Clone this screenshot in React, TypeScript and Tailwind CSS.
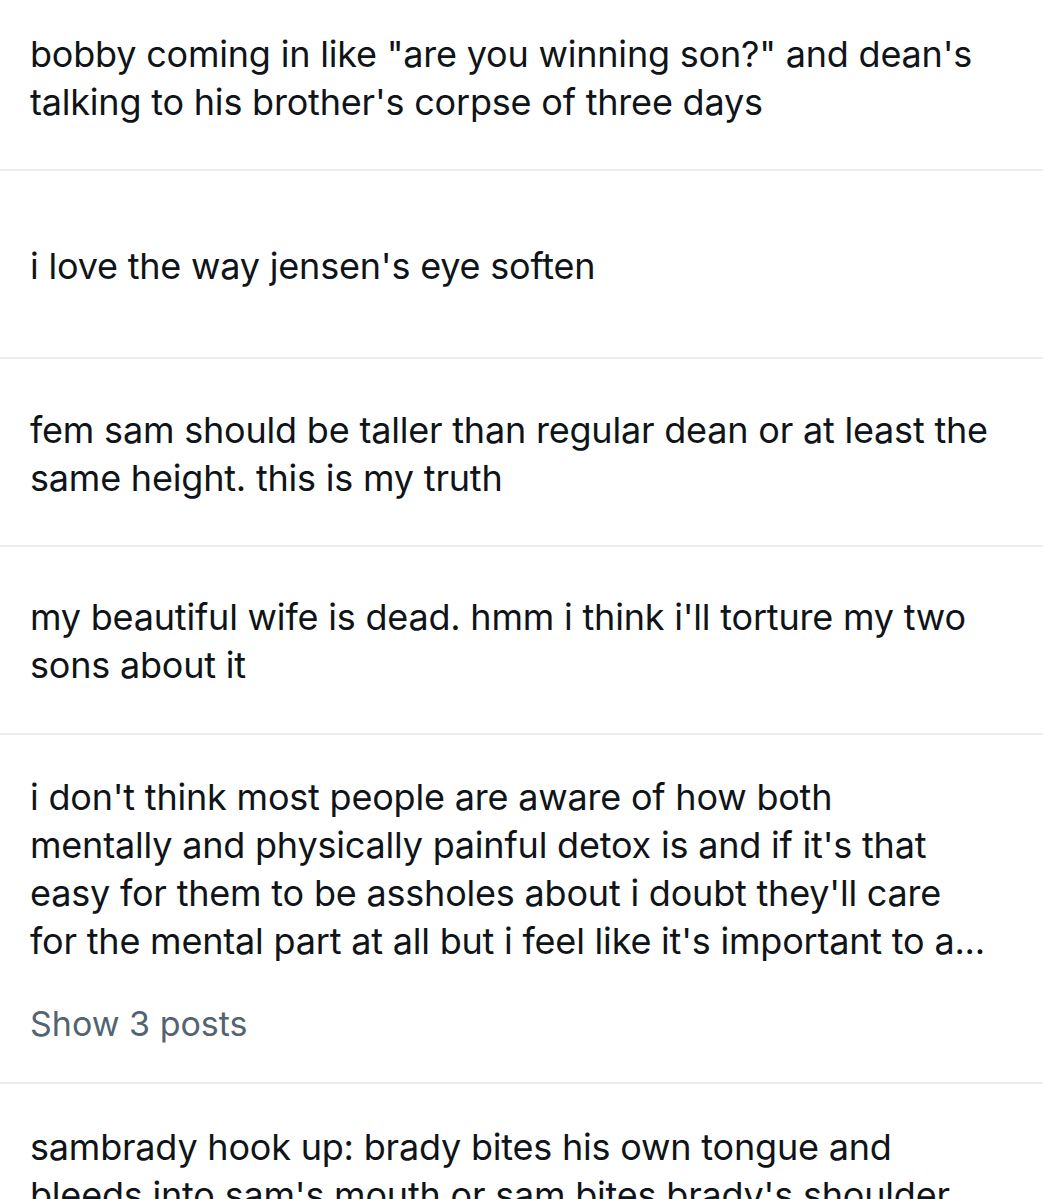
const posts: { lines: string[]; pad: string; more?: boolean }[] = [
  {
    lines: [
      'bobby coming in like "are you winning son?" and dean\'s',
      "talking to his brother's corpse of three days",
    ],
    pad: "pt-[30px] pb-[43px]",
  },
  { lines: ["i love the way jensen's eye soften"], pad: "pt-[71px] pb-[67px]" },
  {
    lines: [
      "fem sam should be taller than regular dean or at least the",
      "same height. this is my truth",
    ],
    pad: "pt-[47px] pb-[43px]",
  },
  {
    lines: [
      "my beautiful wife is dead. hmm i think i'll torture my two",
      "sons about it",
    ],
    pad: "pt-[46px] pb-[44px]",
  },
  {
    lines: [
      "i don't think most people are aware of how both",
      "mentally and physically painful detox is and if it's that",
      "easy for them to be assholes about i doubt they'll care",
      "for the mental part at all but i feel like it's important to a...",
    ],
    pad: "pt-[38px] pb-[34px]",
    more: true,
  },
  {
    lines: [
      "sambrady hook up: brady bites his own tongue and",
      "bleeds into sam's mouth or sam bites brady's shoulder",
    ],
    pad: "pt-[39px] pb-[40px]",
  },
];

export default function App() {
  return (
    <div
      className="w-[1043px] h-[1199px] overflow-hidden bg-white text-[#0f1419]"
      style={{ fontFamily: "Inter, 'Noto Sans', sans-serif" }}
    >
      {posts.map((p, i) => (
        <div
          key={i}
          className={`px-[30px] ${p.pad} ${i < posts.length - 1 ? "border-b-2 border-[#eaeced]" : ""}`}
        >
          <div className="text-[36px] leading-[48px] tracking-[-0.2px]">
            {p.lines.map((l, j) => (
              <div key={j} className="whitespace-nowrap">
                {l}
              </div>
            ))}
          </div>
          {p.more && (
            <div className="mt-[35px] text-[34px] leading-[48px] text-[#536471]">Show 3 posts</div>
          )}
        </div>
      ))}
    </div>
  );
}
